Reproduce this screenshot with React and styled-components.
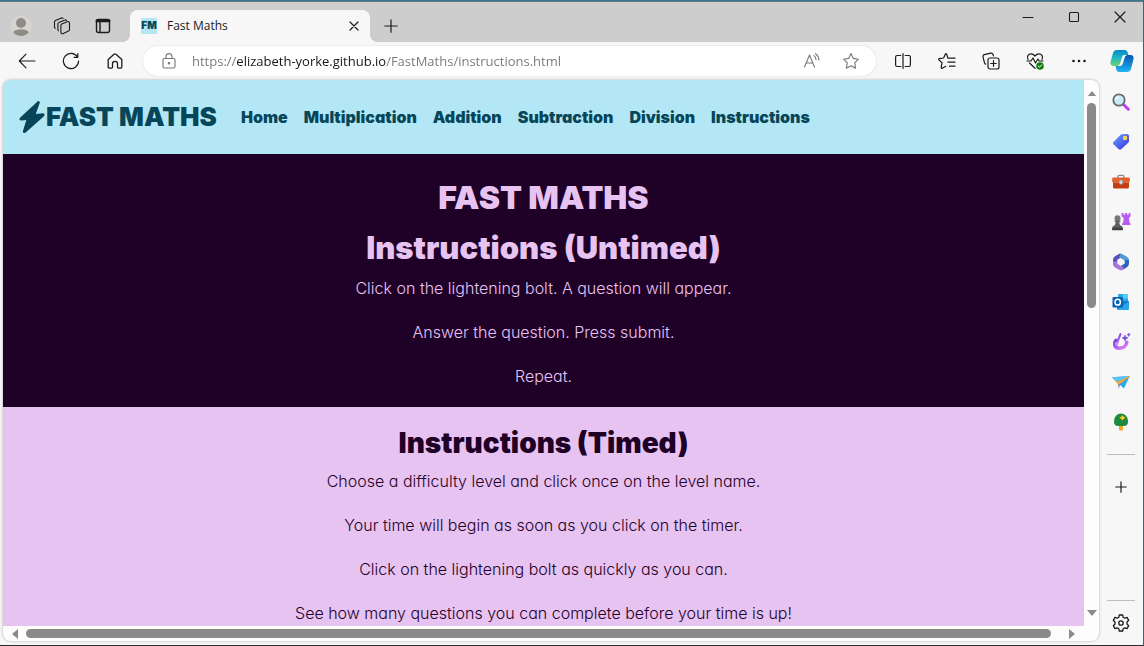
import React from "react";
import styled, { createGlobalStyle } from "styled-components";

const GlobalStyle = createGlobalStyle`
  * { box-sizing: border-box; }
  body { margin: 0; overflow: hidden; }
  button { border: 0; padding: 0; background: none; font: inherit; color: inherit; }
  h1, h2, h3, p, ul { margin: 0; padding: 0; }
`;

const uiFont = `"Open Sans", "Noto Sans", sans-serif`;
const siteFont = `Inter, "Open Sans", sans-serif`;

const BrowserWindow = styled.div`
  display: flex;
  flex-direction: column;
  height: 100vh;
  background: #f7f7f7;
  border-top: 1px solid #35788f;
  border-right: 1px solid #4c5f66;
  border-bottom: 1px solid #2b2b2e;
  font-family: ${uiFont};
  color: #1b1b1b;
`;

const TabStrip = styled.div`
  display: flex;
  flex: none;
  height: 41px;
  background: #cdcdcd;
  border-top: 1px solid #66767c;
`;

const StripTools = styled.div`
  display: flex;
  align-items: center;
  width: 130px;
  padding: 8px 6px 0 0;
`;

const StripButton = styled.button`
  display: flex;
  align-items: center;
  justify-content: center;
  width: 41px;
  height: 32px;
`;

const Tab = styled.div`
  position: relative;
  display: flex;
  align-items: center;
  width: 240px;
  height: 32px;
  margin-top: 8px;
  padding: 0 7px 0 11px;
  background: #f7f7f7;
  border-radius: 8px 8px 0 0;
  &::before,
  &::after {
    content: "";
    position: absolute;
    bottom: 0;
    width: 8px;
    height: 8px;
  }
  &::before {
    left: -8px;
    background: radial-gradient(circle at 0 0, transparent 8px, #f7f7f7 8px);
  }
  &::after {
    right: -8px;
    background: radial-gradient(circle at 100% 0, transparent 8px, #f7f7f7 8px);
  }
`;

const Favicon = styled.span`
  width: 16px;
  height: 16px;
  background: #b4e7f5;
  color: #064658;
  font: 900 10px/15px Inter, sans-serif;
  text-align: center;
`;

const TabTitle = styled.span`
  flex: 1;
  padding-left: 10px;
  font-size: 12px;
  line-height: 16px;
`;

const TabClose = styled.button`
  display: flex;
  align-items: center;
  justify-content: center;
  width: 18px;
  height: 18px;
`;

const NewTab = styled(StripButton)`
  margin-top: 8px;
  width: 42px;
`;

const WindowControls = styled.div`
  display: flex;
  margin-left: auto;
`;

const WindowButton = styled.button`
  display: flex;
  align-items: center;
  justify-content: center;
  width: 46px;
  height: 30px;
`;

const Toolbar = styled.div`
  display: flex;
  flex: none;
  align-items: center;
  height: 38px;
  padding-left: 5px;
`;

const ToolButton = styled.button`
  display: flex;
  flex: none;
  align-items: center;
  justify-content: center;
  width: ${(p) => p.$width || 44}px;
  height: 36px;
`;

const AddressBar = styled.form`
  display: flex;
  flex: 1;
  align-items: center;
  height: 30px;
  margin: 0 5px 0 6px;
  padding: 0 6px 0 8px;
  background: #fff;
  border-radius: 15px;
  box-shadow: 0 0 2px rgba(0, 0, 0, 0.14);
  color: #767676;
`;

const AddressInput = styled.input`
  flex: 1;
  min-width: 0;
  height: 24px;
  margin-left: 5px;
  padding: 0;
  border: 0;
  outline: 0;
  font: 13px/20px ${uiFont};
  background: linear-gradient(90deg, #767676 45px, #161616 45px, #161616 194px, #767676 194px);
  background-clip: text;
  color: transparent;
`;

const Workspace = styled.div`
  display: flex;
  flex: 1;
  min-height: 0;
`;

const Viewport = styled.div`
  display: flex;
  flex: 1;
  flex-direction: column;
  min-width: 0;
  margin: 0 0 4px 3px;
  background: #fdfdfd;
  border-radius: 8px;
  box-shadow: 0 0 3px rgba(0, 0, 0, 0.3);
  overflow: hidden;
`;

const ViewRow = styled.div`
  display: flex;
  flex: 1;
  min-height: 0;
`;

const Page = styled.div`
  flex: 1;
  min-width: 0;
  overflow: hidden;
  background: #e7c3f2;
  font-feature-settings: "cv11";
`;

const SiteHeader = styled.header`
  display: flex;
  align-items: center;
  height: 74px;
  padding-left: 14px;
  background: #b4e7f5;
  color: #064658;
  font-family: ${siteFont};
  font-weight: 900;
`;

const Brand = styled.a`
  display: flex;
  align-items: center;
  margin-right: 24px;
  color: inherit;
  text-decoration: none;
  font-size: 26px;
  line-height: 36px;
  white-space: nowrap;
`;

const SiteNav = styled.nav`
  display: flex;
  gap: 16px;
`;

const NavLink = styled.a`
  color: inherit;
  text-decoration: none;
  font-size: 16px;
  line-height: 24px;
`;

const Section = styled.section`
  display: flex;
  flex-direction: column;
  align-items: center;
  padding: 20px 16px 21px;
  background: ${(p) => (p.$dark ? "#1f0128" : "#e7c3f2")};
  color: ${(p) => (p.$dark ? "#e7c3f2" : "#1f0128")};
`;

const PageTitle = styled.h1`
  margin-bottom: 8px;
  font-family: ${siteFont};
  font-size: 32px;
  font-weight: 900;
  line-height: 48px;
`;

const SectionTitle = styled.h2`
  font-family: ${siteFont};
  font-size: 31px;
  font-weight: 900;
  line-height: 36px;
`;

const SubTitle = styled.h3`
  font-family: ${siteFont};
  font-size: 28px;
  font-weight: 900;
  line-height: 32px;
`;

const Steps = styled.div`
  display: flex;
  flex-direction: column;
  align-items: center;
  gap: 24px;
  margin-top: 12px;
`;

const Step = styled.p`
  font-family: ${siteFont};
  font-size: 16px;
  font-weight: 300;
  line-height: 20px;
`;

const VerticalScroll = styled.div`
  display: flex;
  flex-direction: column;
  align-items: center;
  width: 15px;
  padding: 10px 0;
`;

const HorizontalScroll = styled.div`
  display: flex;
  align-items: center;
  height: 15px;
  padding: 0 24px 0 9px;
`;

const Track = styled.div`
  display: flex;
  flex: 1;
  flex-direction: ${(p) => (p.$vertical ? "column" : "row")};
  margin: ${(p) => (p.$vertical ? "7px 0" : "0 8px")};
`;

const Thumb = styled.div`
  width: ${(p) => (p.$vertical ? "9px" : p.$size)};
  height: ${(p) => (p.$vertical ? p.$size : "9px")};
  background: #8a8a8a;
  border-radius: 5px;
`;

const Sidebar = styled.aside`
  display: flex;
  flex: none;
  flex-direction: column;
  align-items: center;
  width: 44px;
  padding: 2px 0;
`;

const SideButton = styled.button`
  display: flex;
  flex: none;
  align-items: center;
  justify-content: center;
  width: 40px;
  height: 40px;
`;

const SideRule = styled.hr`
  flex: none;
  width: 28px;
  height: 1px;
  margin: ${(p) => (p.$last ? "auto 0 2px" : "12px 0")};
  border: 0;
  background: #bdbdbd;
`;

function Line({ size = 18, width = 1.1, children }) {
  return (
    <svg width={size} height={size} viewBox={`0 0 ${size} ${size}`} fill="none" stroke="currentColor"
      strokeWidth={width} strokeLinecap="round" strokeLinejoin="round" aria-hidden="true">
      {children}
    </svg>
  );
}

const BoltIcon = () => (
  <svg width="29" height="36" viewBox="0 0 29 36" fill="currentColor" aria-hidden="true">
    <path d="M20.800 2.300c.9-.6 2.300.3 1.900 1.600l-3.900 11.200 6.900-.8c1.800-.2 2.500 1.900 1.200 3L8.700 33.600c-1.300 1.100-3.200.2-2.800-1.400l3.400-11.300-5.100.6c-1.700.1-2.400-1.600-1.200-2.800Z" />
  </svg>
);
const Avatar = () => (
  <svg width="22" height="22" viewBox="0 0 22 22" aria-hidden="true">
    <circle cx="11" cy="11" r="10.5" fill="#d8d5d1" />
    <circle cx="11" cy="8" r="5" fill="#8f8b87" />
    <path d="M3.2 17.2C4.5 15 7.500 14.300 11 14.300s6.500.7 7.800 2.900A10 10 0 0 1 11 21a10 10 0 0 1-7.800-3.800Z" fill="#8f8b87" />
  </svg>
);
const WorkspacesIcon = () => (
  <Line>
    <path d="m8.200 7.300 6-2.600c1-.4 2.300.2 2.300 1.400v6.400c0 .7-.4 1.300-1 1.600l-5.200 2.500c-1.100.5-2.400-.1-2.400-1.400V8.600c0-.6.100-1 .3-1.300Z" />
    <path d="M5.500 13.700c-.5-.3-.6-.7-.6-1.300V7c0-.7.400-1.300 1-1.500l6-2.500c.7-.2 1.300 0 1.700.5M2.300 11.300c-.6-.2-.8-.7-.8-1.300V5c0-.7.400-1.200 1-1.500L8.400 1c.7-.2 1.300 0 1.700.5" />
  </Line>
);
const TabActionsIcon = () => (
  <Line width={1.4}>
    <rect x="2.500" y="2.500" width="13" height="13" rx="2" />
    <path d="M3 3.800h12" strokeWidth="3" />
    <path d="M6 5v10.500" />
  </Line>
);
const CloseIcon = ({ size = 10 }) => (
  <Line size={size} width={1.2}><path d={`M1 1 ${size - 1} ${size - 1}M${size - 1} 1 1 ${size - 1}`} /></Line>
);
const PlusIcon = ({ size = 14 }) => (
  <Line size={size} width={1.2}><path d={`M${size / 2} .8V${size - 0.8}M.8 ${size / 2}H${size - 0.8}`} /></Line>
);
const BackIcon = () => <Line><path d="M17 9H1.500M8 2.200 1.300 9 8 15.800" /></Line>;
const RefreshIcon = () => (
  <Line width={1.2}><path d="M15.500 5A7.600 7.600 0 1 0 16.600 9M15.800 1.500V5.300H12" /></Line>
);
const HomeIcon = () => (
  <Line width={1.3}><path d="M2.200 7.600 8 2.300c.6-.5 1.400-.5 2 0l5.800 5.300V15c0 .7-.4 1.100-1.100 1.100h-2.400c-.5 0-.8-.3-.8-.8v-3.800c0-1.300-1-2.200-2.500-2.200s-2.500.9-2.500 2.200v3.800c0 .5-.3.8-.8.8H3.300c-.7 0-1.100-.4-1.100-1.100Z" /></Line>
);
const LockIcon = () => (
  <Line><rect x="3" y="6.500" width="12" height="9.500" rx="1.500" /><path d="M6 6.300V4.600a3 3 0 0 1 6 0v1.700" /><circle cx="9" cy="11.300" r=".7" fill="currentColor" /></Line>
);
const ReadAloudIcon = () => (
  <Line><path d="M1.500 15 6.500 3l5 12M3.200 11h6.600M11 3.600c1.300 1 2 2.300 2 4M12.500 1.700c2.200 1.500 3.400 3.600 3.400 6.300" /></Line>
);
const StarIcon = () => (
  <Line><path d="m9 1.600 2.300 4.800 5.100.8-3.700 3.700.9 5.300L9 13.700l-4.600 2.500.9-5.300-3.700-3.700 5.100-.8Z" /></Line>
);
const SplitIcon = () => (
  <Line width={1.2}><path d="M9 1.500v15M6.800 3.500H3.200C2.300 3.500 1.600 4.200 1.600 5v8c0 .8.700 1.500 1.600 1.500h3.600M11.200 3.500h3.600c.9 0 1.600.7 1.600 1.500v8c0 .8-.7 1.500-1.600 1.500h-3.600" /></Line>
);
const FavoritesIcon = () => (
  <Line width={1.2}><path d="M9.800 6.200 8.600 2c-.2-.6-.9-.6-1.200 0L5.600 6l-4.300.6c-.7.100-.9.8-.4 1.300L4 10.800l-.8 4.600c-.1.7.5 1.100 1.100.8l3.500-1.900M10.500 6.200h6.500M10 10.200h7M11.500 14.200H17" /></Line>
);
const CollectionsIcon = () => (
  <Line width={1.2}>
    <rect x="6" y="6" width="11" height="11" rx="2" />
    <path d="M11.500 8.700v5.600M8.700 11.500h5.600M3.800 12.200c-.7-.2-1.100-.7-1.300-1.400L1 4.800c-.2-1 .3-1.900 1.300-2.100l6.500-1.600c1-.2 1.800.2 2.200 1.200l.4 1.500" />
  </Line>
);
const EssentialsIcon = () => (
  <svg width="18" height="18" viewBox="0 0 18 18" fill="none" stroke="currentColor" strokeWidth="1.200" strokeLinecap="round" strokeLinejoin="round" aria-hidden="true">
    <path d="M2 7.500C.5 4.500 2.300 1.900 5 1.900c1.700 0 2.900.8 4 2.100 1.100-1.300 2.300-2.100 4-2.100 2.700 0 4.500 2.600 3 5.600M1 9h4l2-3 2.500 5L12 7l1.200 2H17M3.500 11 9 16.300" />
    <circle cx="14" cy="14" r="3.800" fill="#107c10" stroke="none" />
    <path d="m12.300 14 1.200 1.200 2.300-2.400" stroke="#fff" strokeWidth="1" />
  </svg>
);
const DotsIcon = () => (
  <svg width="16" height="4" viewBox="0 0 16 4" fill="currentColor" aria-hidden="true"><circle cx="2.500" cy="2" r="1.300" /><circle cx="8" cy="2" r="1.300" /><circle cx="13.500" cy="2" r="1.300" /></svg>
);
const CopilotIcon = () => (
  <svg width="24" height="24" viewBox="0 0 24 24" aria-hidden="true">
    <defs>
      <linearGradient id="copA" x1="0" y1="0" x2="0" y2="1"><stop stopColor="#0b86c8" /><stop offset=".5" stopColor="#20b8c5" /><stop offset="1" stopColor="#72d06a" /></linearGradient>
      <linearGradient id="copB" x1="0" y1="0" x2="0" y2="1"><stop stopColor="#0855b0" /><stop offset="1" stopColor="#22b5f3" /></linearGradient>
    </defs>
    <path d="M7 1h8c1.500 0 2.200 1 2.700 2.500L18.500 6H15c-1.600 0-2.300.8-2.800 2.500L10.500 14c-.7 2.300-1.800 3-3.500 3H3.500C1 17 0 15.300.5 13L3 4c.6-2 1.900-3 4-3Z" fill="url(#copA)" />
    <path d="M17 23H9c-1.500 0-2.200-1-2.700-2.500L5.600 17H9c1.600 0 2.300-.8 2.800-2.500L13.500 9c.7-2.300 1.800-3 3.500-3h3.500c2.500 0 3.500 1.700 3 4L21 20c-.6 2-1.900 3-4 3Z" fill="url(#copB)" />
    <path d="M15.500 6c-2 0-2.800.8-3.300 2.500L10.500 14c-.7 2-1.500 2.800-3.500 3h2.500c1.800 0 2.800-.8 3.300-2.500L14.500 9c.5-1.800 1.300-2.800 3-3Z" fill="#fff" />
  </svg>
);
const SearchIcon = () => (
  <svg width="20" height="20" viewBox="0 0 20 20" aria-hidden="true">
    <path d="m11.500 11.500 2.500 2.500" stroke="#777" strokeWidth="2" />
    <path d="m13.500 13.500 3.800 3.700" stroke="#bd3bf0" strokeWidth="3" strokeLinecap="round" />
    <circle cx="8" cy="8" r="5.700" fill="#c9eafa" stroke="#6b6b6e" strokeWidth="1.800" />
    <path d="M4.800 7c.6-1.600 1.800-2.200 3.200-2.200" stroke="#fff" strokeWidth="1.200" fill="none" />
  </svg>
);
const ShoppingIcon = () => (
  <svg width="20" height="20" viewBox="0 0 20 20" aria-hidden="true">
    <defs><linearGradient id="tag" x1="0" y1="0" x2="1" y2="1"><stop stopColor="#65aaff" /><stop offset="1" stopColor="#3a2be0" /></linearGradient></defs>
    <path d="M11.200 2.300 16 2c1.200 0 2 .8 2 2v5c0 .8-.3 1.300-.8 1.800L10.500 17c-1 .9-2 .9-3 0L2.700 12.600c-1-.9-1-2 0-2.900l6.700-6.600c.5-.5 1-.8 1.800-.8Z" fill="url(#tag)" />
    <circle cx="14" cy="6" r="1.600" fill="#e8c86a" stroke="#ffd83a" strokeWidth="1.200" />
  </svg>
);
const ToolsIcon = () => (
  <svg width="20" height="20" viewBox="0 0 20 20" aria-hidden="true">
    <path d="M7 6V4.500C7 3.700 7.500 3.300 8.200 3.300h3.600c.7 0 1.200.4 1.200 1.200V6" fill="none" stroke="#8b8b90" strokeWidth="1.300" />
    <rect x="1.200" y="5.500" width="17.600" height="5" rx="1" fill="#e4602b" />
    <path d="M2 10.500h16v4.300c0 1-.6 1.600-1.500 1.600h-13c-.9 0-1.500-.6-1.500-1.600Z" fill="#c43c12" />
    <rect x="8.200" y="8" width="3.600" height="4.300" rx="1" fill="#d5d7dc" stroke="#7f8388" strokeWidth=".6" />
  </svg>
);
const GamesIcon = () => (
  <svg width="20" height="20" viewBox="0 0 20 20" aria-hidden="true">
    <path d="M10.600 1h2v1.800h1.500V1h2v1.800h1.500V1h1.900v3.500l-1.500 1.300.4 4.400 1.100 1.300V13h-8.300v-1.500l1.100-1.300.4-4.400-2.100-1.300Z" fill="#b85cf1" />
    <circle cx="6.500" cy="6.300" r="3" fill="#77777a" />
    <path d="M3.500 8.500h6v1.300H8.400c0 2.200.7 3.600 1.600 4.200h1.300v2.500H1.700V14H3c.9-.6 1.600-2 1.600-4.200H3.500Z" fill="#606063" />
    <rect x="1" y="15.500" width="11" height="2.700" rx=".8" fill="#424245" />
  </svg>
);
const M365Icon = () => (
  <svg width="20" height="20" viewBox="0 0 20 20" fill="none" strokeWidth="4.200" aria-hidden="true">
    <path d="M4.100 13V7.700c0-.8.300-1.300 1-1.700l5.200-3" stroke="#5b4fb8" />
    <path d="m9 3.200 5.800 3.400c.7.400 1.100 1 1.100 1.700v3" stroke="#4d9bdc" />
    <path d="M15.900 8v3.800c0 .7-.4 1.200-1 1.600l-4.600 2.700" stroke="#2f62bd" />
    <path d="M12 15.200 10.800 16c-.5.3-1.100.3-1.600 0l-4-2.400c-.7-.4-1.100-.9-1.100-1.600V9.500" stroke="#a974dc" />
  </svg>
);
const OutlookIcon = () => (
  <svg width="20" height="20" viewBox="0 0 20 20" aria-hidden="true">
    <rect x="7" y="2" width="10" height="9" rx="1" fill="#28a8ea" />
    <path d="M12 2h5v4.500h-5Z" fill="#50d0f5" />
    <path d="M6 9h12v7.500c0 .8-.4 1.200-1.200 1.200H7.200C6.400 17.700 6 17.300 6 16.500Z" fill="#0f7bc9" />
    <path d="m18 9-11.500 8.300c.3.3.5.4 1 .4h9.300c.8 0 1.200-.4 1.200-1.200Z" fill="#26a6e8" />
    <rect x="1.500" y="5" width="10.500" height="10.500" rx="1.200" fill="#0564b5" />
    <ellipse cx="6.700" cy="10.200" rx="2.700" ry="2.900" fill="none" stroke="#fff" strokeWidth="1.500" />
  </svg>
);
const DesignerIcon = () => (
  <svg width="20" height="20" viewBox="0 0 20 20" fill="none" aria-hidden="true">
    <defs><linearGradient id="drop" x1="0" y1="0" x2="1" y2="1"><stop stopColor="#7a3fdd" /><stop offset="1" stopColor="#e685f7" /></linearGradient></defs>
    <path d="M5 8.500C3.700 10 3.200 11.200 3.700 13c.6 2.100 2.700 3.300 5 3.200 3.600 0 6.800-2.300 7.100-6" stroke="url(#drop)" strokeWidth="3.600" strokeLinecap="round" />
    <path d="M9.500 2.200 5.500 12" stroke="#9a5be6" strokeWidth="2.200" strokeLinecap="round" />
    <circle cx="5.600" cy="11.800" r="1.900" fill="#cf86f7" />
    <path d="m14 3 .9 2.100 2.100.9-2.100.9-.9 2.100-.9-2.100-2.100-.9 2.100-.9ZM17.700 1l.5 1.300 1.300.4-1.300.5-.5 1.300-.4-1.300-1.300-.5 1.300-.4Z" fill="#7047dd" stroke="#7047dd" strokeWidth=".5" />
  </svg>
);
const DropIcon = () => (
  <svg width="20" height="20" viewBox="0 0 20 20" aria-hidden="true">
    <path d="M1 5.200 18.800 4 13 16.500l-4.500-4Z" fill="#30a8ef" />
    <path d="M1 5.200 18.800 4 6 10Z" fill="#58c3f7" />
    <path d="M6.500 10 18.800 4l-10 8.500-.9 3.900Z" fill="#1f68c3" />
    <path d="M3.500 7.800 6 10.500 18.800 4 7.300 12.800 6.500 11Z" fill="#f6b13b" stroke="#f6b13b" strokeWidth=".8" />
  </svg>
);
const TreeIcon = () => (
  <svg width="20" height="20" viewBox="0 0 20 20" aria-hidden="true">
    <rect x="8" y="12" width="4" height="6.500" rx="1" fill="#f5a623" />
    <path d="M10 1.500c4.500 0 7 4 7 8.200 0 2.900-1.700 4.300-4.200 4.300H7.200C4.700 14 3 12.600 3 9.700 3 5.500 5.500 1.500 10 1.500Z" fill="#1f8a3f" />
    <path d="m11.500 3.300 1.200 1.400 1.800 1.100-1.800 1.200-1.200 1.500-1.200-1.500-1.800-1.200 1.800-1.100Z" fill="#ffc928" />
  </svg>
);
const GearIcon = () => (
  <Line size={20} width={1.300}>
    <path d="M8.300 2h3.400l.5 2.300 1.500.9 2.300-.8 1.700 2.900L16 9v2l1.700 1.700-1.700 2.900-2.300-.8-1.500.9-.5 2.300H8.300l-.5-2.300-1.500-.9-2.300.8-1.700-2.900L4 11V9L2.300 7.300 4 4.400l2.300.8 1.500-.9Z" />
    <circle cx="10" cy="10" r="2.200" />
  </Line>
);

const arrows = { up: "M0 7 5 1l5 6Z", down: "M0 0h10L5 6Z", left: "M6 0 0 5l6 5Z", right: "M0 0v10l6-5Z" };
function Arrow({ to }) {
  const flat = to === "up" || to === "down";
  return (
    <svg width={flat ? 10 : 6} height={flat ? 6 : 10} viewBox={flat ? "0 0 10 6" : "0 0 6 10"} aria-hidden="true">
      <path d={arrows[to]} fill="#8a8a8a" />
    </svg>
  );
}

const navItems = ["Home", "Multiplication", "Addition", "Subtraction", "Division", "Instructions"];
const untimed = ["Click on the lightening bolt. A question will appear.", "Answer the question. Press submit.", "Repeat."];
const timed = [
  "Choose a difficulty level and click once on the level name.",
  "Your time will begin as soon as you click on the timer.",
  "Click on the lightening bolt as quickly as you can.",
  "See how many questions you can complete before your time is up!",
];
const sideApps = [
  ["Search", SearchIcon], ["Shopping", ShoppingIcon], ["Tools", ToolsIcon], ["Games", GamesIcon], ["Microsoft 365", M365Icon],
  ["Outlook", OutlookIcon], ["Image Creator", DesignerIcon], ["Drop", DropIcon], ["E-tree", TreeIcon],
];
const rightTools = [
  ["Split screen", SplitIcon], ["Favorites", FavoritesIcon], ["Collections", CollectionsIcon],
  ["Browser essentials", EssentialsIcon], ["Settings and more", DotsIcon],
];

export default function App() {
  return (
    <BrowserWindow>
      <GlobalStyle />
      <TabStrip>
        <StripTools>
          <StripButton aria-label="Profile"><Avatar /></StripButton>
          <StripButton aria-label="Workspaces"><WorkspacesIcon /></StripButton>
          <StripButton aria-label="Tab actions"><TabActionsIcon /></StripButton>
        </StripTools>
        <Tab>
          <Favicon>FM</Favicon>
          <TabTitle>Fast Maths</TabTitle>
          <TabClose aria-label="Close tab"><CloseIcon /></TabClose>
        </Tab>
        <NewTab aria-label="New tab"><PlusIcon /></NewTab>
        <WindowControls>
          <WindowButton aria-label="Minimize"><Line size={12}><path d="M1 6.500h10" /></Line></WindowButton>
          <WindowButton aria-label="Maximize"><Line size={12}><rect x="1.500" y="1.500" width="9" height="9" rx="1" /></Line></WindowButton>
          <WindowButton aria-label="Close"><CloseIcon size={12} /></WindowButton>
        </WindowControls>
      </TabStrip>

      <Toolbar>
        <ToolButton aria-label="Back"><BackIcon /></ToolButton>
        <ToolButton aria-label="Refresh"><RefreshIcon /></ToolButton>
        <ToolButton aria-label="Home"><HomeIcon /></ToolButton>
        <AddressBar onSubmit={(e) => e.preventDefault()}>
          <ToolButton type="button" $width={36} aria-label="Site information"><LockIcon /></ToolButton>
          <AddressInput aria-label="Address" defaultValue="https://elizabeth-yorke.github.io/FastMaths/instructions.html" spellCheck={false} />
          <ToolButton type="button" $width={40} aria-label="Read aloud"><ReadAloudIcon /></ToolButton>
          <ToolButton type="button" $width={38} aria-label="Add to favorites"><StarIcon /></ToolButton>
        </AddressBar>
        {rightTools.map(([name, Icon]) => (
          <ToolButton key={name} aria-label={name}><Icon /></ToolButton>
        ))}
        <ToolButton $width={42} aria-label="Copilot"><CopilotIcon /></ToolButton>
      </Toolbar>

      <Workspace>
        <Viewport>
          <ViewRow>
            <Page>
              <SiteHeader>
                <Brand href="#home"><BoltIcon />FAST MATHS</Brand>
                <SiteNav>
                  {navItems.map((item) => (
                    <NavLink key={item} href={`#${item.toLowerCase()}`}>{item}</NavLink>
                  ))}
                </SiteNav>
              </SiteHeader>
              <Section $dark>
                <PageTitle>FAST MATHS</PageTitle>
                <SectionTitle>Instructions (Untimed)</SectionTitle>
                <Steps>{untimed.map((s) => <Step key={s}>{s}</Step>)}</Steps>
              </Section>
              <Section>
                <SubTitle>Instructions (Timed)</SubTitle>
                <Steps>{timed.map((s) => <Step key={s}>{s}</Step>)}</Steps>
              </Section>
            </Page>
            <VerticalScroll>
              <Arrow to="up" />
              <Track $vertical><Thumb $vertical $size="41%" /></Track>
              <Arrow to="down" />
            </VerticalScroll>
          </ViewRow>
          <HorizontalScroll>
            <Arrow to="left" />
            <Track><Thumb $size="99%" /></Track>
            <Arrow to="right" />
          </HorizontalScroll>
        </Viewport>
        <Sidebar>
          {sideApps.map(([name, Icon]) => (
            <SideButton key={name} aria-label={name}><Icon /></SideButton>
          ))}
          <SideRule />
          <SideButton aria-label="Customize"><PlusIcon size={12} /></SideButton>
          <SideRule $last />
          <SideButton aria-label="Settings"><GearIcon /></SideButton>
        </Sidebar>
      </Workspace>
    </BrowserWindow>
  );
}
